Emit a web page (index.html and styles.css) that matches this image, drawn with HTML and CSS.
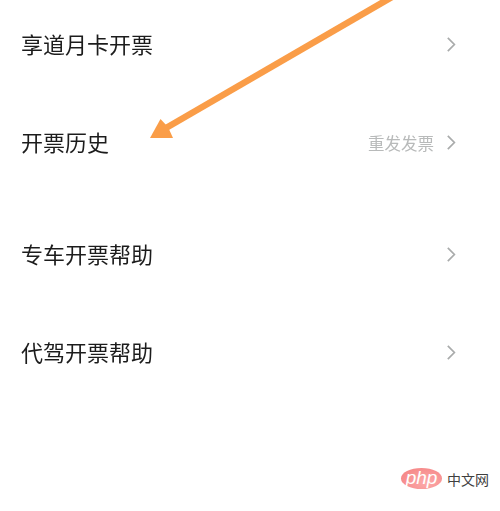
FILE: index.html
```html
<!DOCTYPE html>
<html lang="zh-CN">
<head>
<meta charset="utf-8">
<title>开票</title>
<link rel="stylesheet" href="styles.css">
</head>
<body>
<main class="screen">
  <section class="group">
    <div class="row"><span class="label">享道月卡开票</span><svg class="chev" viewBox="0 0 10 16"><path d="M1.6 1 L8.6 8 L1.6 15"/></svg></div>
    <div class="row"><span class="label">开票历史</span><span class="extra"><span class="hint">重发发票</span><svg class="chev" viewBox="0 0 10 16"><path d="M1.6 1 L8.6 8 L1.6 15"/></svg></span></div>
  </section>
  <section class="group">
    <div class="row"><span class="label">专车开票帮助</span><svg class="chev" viewBox="0 0 10 16"><path d="M1.6 1 L8.6 8 L1.6 15"/></svg></div>
    <div class="row"><span class="label">代驾开票帮助</span><svg class="chev" viewBox="0 0 10 16"><path d="M1.6 1 L8.6 8 L1.6 15"/></svg></div>
  </section>
  <svg class="arrow" viewBox="0 0 500 511" aria-hidden="true">
    <path class="arrow-line" d="M392 -3 L166 128"/>
    <path class="arrow-head" d="M150 138 L160.500 119 L168 127 L173 138 Z"/>
  </svg>
  <div class="mark">
    <span class="oval">php</span>
    <span class="site">中文网</span>
  </div>
</main>
</body>
</html>
```
FILE: styles.css
```css
* { box-sizing: border-box; }
html, body { margin: 0; padding: 0; background: #fff; }
.screen {
  position: relative;
  width: 500px;
  height: 511px;
  overflow: hidden;
  font-family: "Noto Sans CJK SC", "Liberation Sans", sans-serif;
}
.group { display: flex; flex-direction: column; margin-bottom: 14px; }
.group:first-of-type { margin-top: -4px; }
.row {
  height: 98px;
  display: flex;
  align-items: center;
  justify-content: space-between;
  padding: 0 44px 0 22px;
}
.label {
  margin: 0 0 4px -1px;
  font-size: 22px;
  line-height: 30px;
  color: #1c1c1c;
  filter: blur(0.35px);
}
.extra { display: flex; align-items: center; gap: 12px; }
.hint { font-size: 16.5px; line-height: 22px; color: #b8baba; filter: blur(0.4px); }
.chev { width: 10px; height: 15px; display: block; margin-bottom: 1px; filter: blur(0.3px); }
.chev path { fill: none; stroke: #a9abab; stroke-width: 1.8; }
.arrow { position: absolute; inset: 0; width: 500px; height: 511px; filter: blur(0.4px); }
.arrow-line { stroke: #fa9d48; stroke-width: 6.5; fill: none; }
.arrow-head { fill: #fa9d48; }
.mark {
  position: absolute;
  left: 401px;
  top: 468px;
  display: flex;
  align-items: center;
  gap: 5px;
}
.oval {
  width: 41px;
  height: 21px;
  border-radius: 50%;
  background: radial-gradient(ellipse at 60% 70%, #fcaaaa 0%, #f47f7f 100%);
  color: #fff;
  font-family: "Liberation Sans", sans-serif;
  font-style: italic;
  font-size: 19px;
  line-height: 19px;
  text-align: center;
}
.site { font-size: 14px; line-height: 20px; color: #3f3f3f; }
```
